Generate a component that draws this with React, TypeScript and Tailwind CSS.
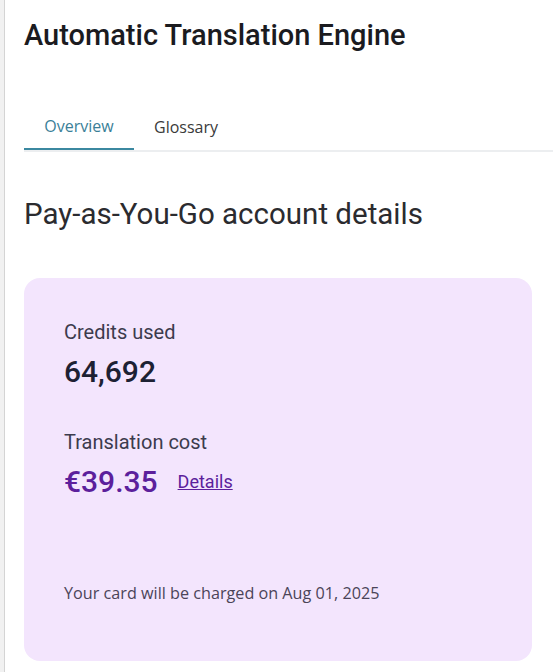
export default function App() {
  return (
    <div className="flex min-h-[672px] bg-white">
      <div className="w-[5px] shrink-0 bg-[#f1f1f1] border-r border-[#d4d4d4]" />
      <main className="flex-1 pl-[19px] pt-[16px]">
        <h1 className="text-[29px] leading-[38px] font-medium text-[#1b1b1f] font-['Roboto',sans-serif]">
          Automatic Translation Engine
        </h1>

        <nav className="mt-[54px] flex border-b-2 border-[#eceef0] font-['Open_Sans',sans-serif] text-[16px]">
          <button className="-mb-[2px] w-[110px] h-[42px] pb-[5px] border-b-2 border-[#3b88a0] text-[#3b7f98]">
            Overview
          </button>
          <button className="px-[20px] h-[42px] pb-[5px] text-[#3a3a3a]">Glossary</button>
        </nav>

        <h2 className="mt-[44px] text-[29.5px] leading-[36px] text-[#2b2b2f] font-['Roboto',sans-serif]">
          Pay-as-You-Go account details
        </h2>

        <section className="mt-[46px] mr-[21px] h-[383px] rounded-[16px] bg-[#f3e5fd] pl-[40px] pt-[41px] font-['Roboto',sans-serif]">
          <p className="text-[20px] leading-[26px] text-[#3c3b4d]">Credits used</p>
          <p className="mt-[8px] text-[30px] leading-[38px] font-medium text-[#1d2133]">64,692</p>

          <p className="mt-[38px] text-[20px] leading-[26px] text-[#3c3b4d]">Translation cost</p>
          <div className="mt-[8px] flex items-center gap-[20px]">
            <span className="text-[30px] leading-[38px] font-medium text-[#5c1f9c]">€39.35</span>
            <a href="#" className="text-[18px] leading-[24px] underline text-[#5c1f9c]">
              Details
            </a>
          </div>

          <p className="mt-[81px] font-['Open_Sans',sans-serif] text-[16.2px] leading-[22px] text-[#4b4458]">
            Your card will be charged on Aug 01, 2025
          </p>
        </section>
      </main>
    </div>
  );
}
